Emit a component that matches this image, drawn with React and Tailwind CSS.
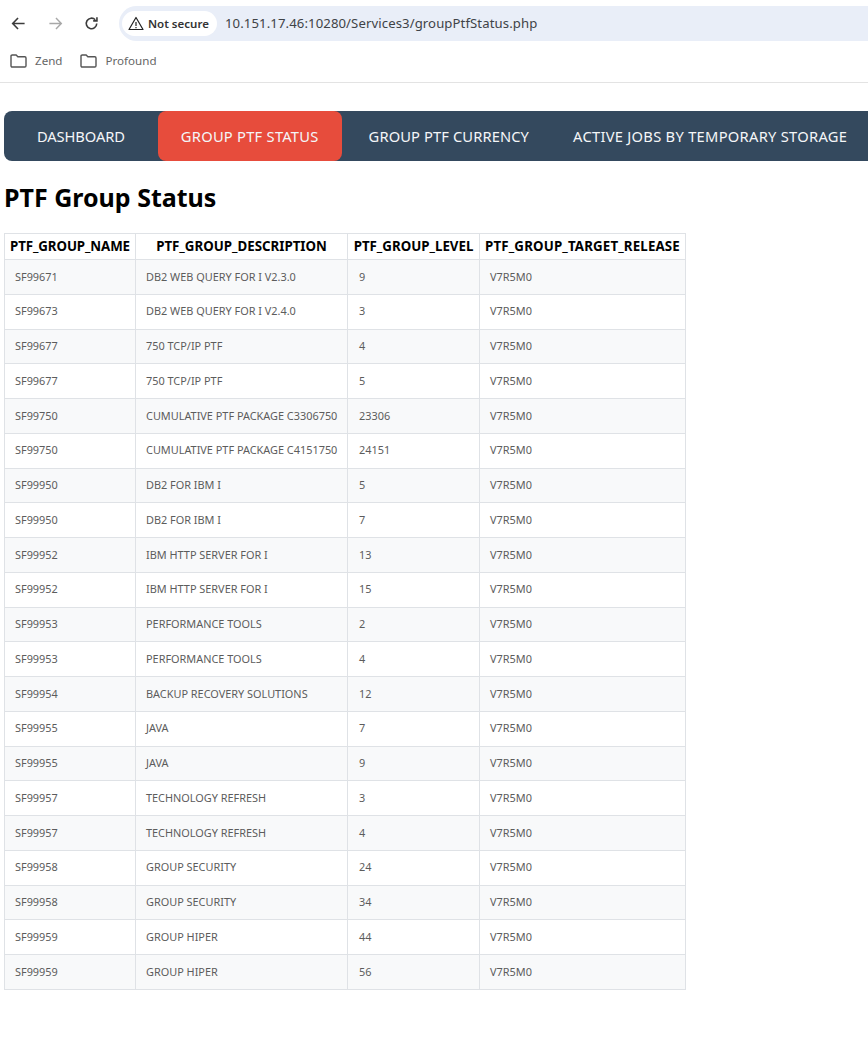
import React from "react";

const rows = [
  ["SF99671", "DB2 WEB QUERY FOR I V2.3.0", "9"],
  ["SF99673", "DB2 WEB QUERY FOR I V2.4.0", "3"],
  ["SF99677", "750 TCP/IP PTF", "4"],
  ["SF99677", "750 TCP/IP PTF", "5"],
  ["SF99750", "CUMULATIVE PTF PACKAGE C3306750", "23306"],
  ["SF99750", "CUMULATIVE PTF PACKAGE C4151750", "24151"],
  ["SF99950", "DB2 FOR IBM I", "5"],
  ["SF99950", "DB2 FOR IBM I", "7"],
  ["SF99952", "IBM HTTP SERVER FOR I", "13"],
  ["SF99952", "IBM HTTP SERVER FOR I", "15"],
  ["SF99953", "PERFORMANCE TOOLS", "2"],
  ["SF99953", "PERFORMANCE TOOLS", "4"],
  ["SF99954", "BACKUP RECOVERY SOLUTIONS", "12"],
  ["SF99955", "JAVA", "7"],
  ["SF99955", "JAVA", "9"],
  ["SF99957", "TECHNOLOGY REFRESH", "3"],
  ["SF99957", "TECHNOLOGY REFRESH", "4"],
  ["SF99958", "GROUP SECURITY", "24"],
  ["SF99958", "GROUP SECURITY", "34"],
  ["SF99959", "GROUP HIPER", "44"],
  ["SF99959", "GROUP HIPER", "56"],
];

const Folder = () => (
  <svg width="17" height="14" viewBox="0 0 17 14" fill="none" stroke="#555" strokeWidth="1.4" strokeLinejoin="round">
    <path d="M1 2.2C1 1.5 1.5 1 2.2 1h4l1.6 1.8h7c.7 0 1.2.5 1.2 1.2v7.8c0 .7-.5 1.2-1.2 1.2H2.2C1.5 13 1 12.5 1 11.8z" />
  </svg>
);

export default function App() {
  return (
    <div className="w-[868px] h-[1048px] overflow-hidden bg-white font-['Noto_Sans',sans-serif]">
      <div className="h-[83px] border-b border-[#e3e3e3]">
        <div className="flex items-center h-[47px]">
          <div className="flex items-center w-[119px] shrink-0">
            <svg className="ml-[11px]" width="15" height="15" viewBox="0 0 16 16" fill="none" stroke="#3c3c3c" strokeWidth="1.7">
              <path d="M14.5 8H2M7.5 2.2 1.8 8l5.7 5.8" />
            </svg>
            <svg className="ml-[22px]" width="15" height="15" viewBox="0 0 16 16" fill="none" stroke="#a8a8a8" strokeWidth="1.5">
              <path d="M1.5 8H14M8.5 2.2 14.2 8l-5.7 5.8" />
            </svg>
            <svg className="ml-[21px]" width="15" height="15" viewBox="0 0 16 16" fill="none" stroke="#3c3c3c" strokeWidth="1.7">
              <path d="M13.6 8a5.6 5.6 0 1 1-1.6-4" />
              <path d="M13.8 1.2v4h-4" strokeLinejoin="miter" />
            </svg>
          </div>
          <div className="flex items-center flex-1 h-[35px] rounded-l-full bg-[#e9eef8] pl-[3px]">
            <div className="flex items-center h-[25px] w-[95px] rounded-full bg-white pl-[6px] gap-[4px]">
              <svg width="16" height="15" viewBox="0 0 16 15" fill="none" stroke="#222" strokeWidth="1.2" strokeLinejoin="round">
                <path d="M8 1.5 15 13.5H1z" />
                <path d="M8 6v4M8 11v1.2" />
              </svg>
              <span className="text-[11.5px] font-semibold text-[#333] whitespace-nowrap">Not secure</span>
            </div>
            <span className="ml-[8px] text-[13.15px] tracking-[0.1px] text-[#3f4347] whitespace-nowrap">10.151.17.46:10280/Services3/groupPtfStatus.php</span>
          </div>
        </div>
        <div className="flex items-center h-[28px] pl-[10px] text-[11.6px] text-[#666]">
          <Folder />
          <span className="ml-[8px]">Zend</span>
          <span className="ml-[18px]"><Folder /></span>
          <span className="ml-[8px]">Profound</span>
        </div>
      </div>

      <nav className="flex ml-[4px] mt-[28px] w-[900px] h-[50px] rounded-l-[8px] bg-[#34495e] pl-[10px] text-[14.7px] text-[#f4f6f8] whitespace-nowrap">
        <a className="flex items-center px-[23px] tracking-[-0.1px]">DASHBOARD</a>
        <a className="flex items-center ml-[10px] px-[23px] rounded-[8px] bg-[#e74c3c] tracking-[0.25px]">GROUP PTF STATUS</a>
        <a className="flex items-center ml-[4px] px-[23px] tracking-[0.11px]">GROUP PTF CURRENCY</a>
        <a className="flex items-center ml-[-2px] px-[23px] tracking-[0.28px]">ACTIVE JOBS BY TEMPORARY STORAGE</a>
      </nav>

      <h1 className="ml-[4px] mt-[19px] h-[35px] text-[25px] leading-[35px] font-bold text-black">PTF Group Status</h1>

      <table className="ml-[4px] mt-[18px] w-[682px] table-fixed border-collapse border border-[#dfe2e6]">
        <colgroup>
          <col className="w-[131px]" />
          <col className="w-[212px]" />
          <col className="w-[132px]" />
          <col className="w-[206px]" />
        </colgroup>
        <thead>
          <tr className="h-[26px] text-[13.3px] font-bold text-black">
            <th className="border border-[#dfe2e6] p-0 whitespace-nowrap font-bold tracking-[-0.1px]">PTF_GROUP_NAME</th>
            <th className="border border-[#dfe2e6] p-0 whitespace-nowrap font-bold">PTF_GROUP_DESCRIPTION</th>
            <th className="border border-[#dfe2e6] p-0 whitespace-nowrap font-bold">PTF_GROUP_LEVEL</th>
            <th className="border border-[#dfe2e6] p-0 whitespace-nowrap font-bold tracking-[0.15px]">PTF_GROUP_TARGET_RELEASE</th>
          </tr>
        </thead>
        <tbody>
          {rows.map((r, i) => (
            <tr key={i} className={`h-[34.75px] text-[10.9px] text-[#5c5c5c] ${i % 2 === 0 ? "bg-[#f8f9fa]" : "bg-white"}`}>
              <td className="border border-[#dfe2e6] pl-[10px]">{r[0]}</td>
              <td className="border border-[#dfe2e6] pl-[10px] whitespace-nowrap">{r[1]}</td>
              <td className="border border-[#dfe2e6] pl-[11px]">{r[2]}</td>
              <td className="border border-[#dfe2e6] pl-[10px]">V7R5M0</td>
            </tr>
          ))}
        </tbody>
      </table>
    </div>
  );
}
